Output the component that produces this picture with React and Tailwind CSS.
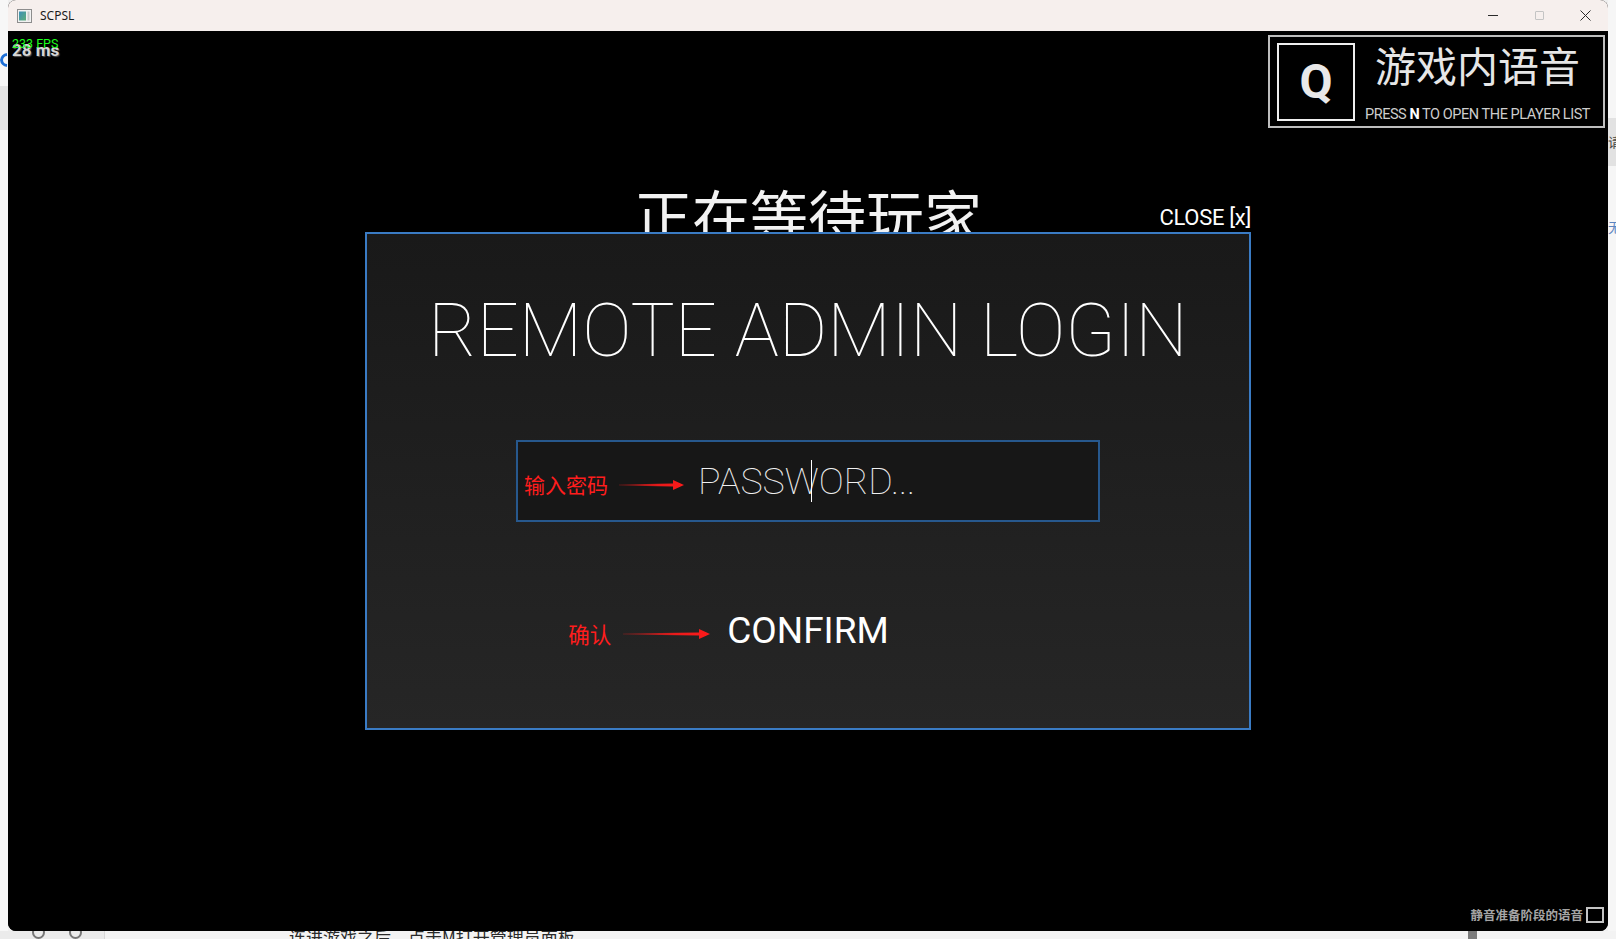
import React from "react";

const cjk = "font-[family-name:'Noto_Sans_CJK_SC',sans-serif]";

function AppIcon() {
  return (
    <svg width="15" height="14" viewBox="0 0 15 14">
      <defs>
        <linearGradient id="appicon" x1="0" y1="0" x2="1" y2="1">
          <stop offset="0" stopColor="#3d8fb8" />
          <stop offset="1" stopColor="#5fae7a" />
        </linearGradient>
      </defs>
      <rect x="0.5" y="0.5" width="14" height="13" fill="#f2f2f2" stroke="#8d8d8d" />
      <rect x="2" y="2.5" width="7" height="9" fill="url(#appicon)" />
      <rect x="10.5" y="2.5" width="2" height="9" fill="#c9c9c9" />
    </svg>
  );
}

function TitleBar() {
  return (
    <div className="h-[31px] bg-[#f6efed] flex items-center shrink-0">
      <div className="ml-[9px] flex items-center">
        <AppIcon />
      </div>
      <span className="ml-[8px] text-[12px] text-[#1b1b1b] font-[family-name:'Noto_Sans',sans-serif]">SCPSL</span>
      <div className="ml-auto flex h-full">
        <div className="w-[46px] flex items-center justify-center">
          <div className="w-[10px] h-px bg-[#2a2a2a]" />
        </div>
        <div className="w-[46px] flex items-center justify-center">
          <div className="w-[9px] h-[9px] border border-[#c4c4c4] rounded-[1px]" />
        </div>
        <div className="w-[46px] flex items-center justify-center">
          <svg width="11" height="11" viewBox="0 0 11 11">
            <path d="M0.5 0.5 L10.5 10.5 M10.5 0.5 L0.5 10.5" stroke="#2a2a2a" strokeWidth="1" />
          </svg>
        </div>
      </div>
    </div>
  );
}

function Arrow({ width, id }) {
  const h = 12;
  const m = 6;
  const head = 11;
  const pts = [
    `0,${m - 0.4}`,
    `${width - head},${m - 1.5}`,
    `${width - head},${m - 5}`,
    `${width},${m}`,
    `${width - head},${m + 5}`,
    `${width - head},${m + 1.5}`,
    `0,${m + 0.4}`,
  ].join(" ");
  return (
    <svg width={width} height={h} viewBox={`0 0 ${width} ${h}`} className="shrink-0">
      <defs>
        <linearGradient id={id} x1="0" y1="0" x2="1" y2="0">
          <stop offset="0" stopColor="#ff1a1a" stopOpacity="0.25" />
          <stop offset="0.6" stopColor="#ff1a1a" stopOpacity="0.9" />
          <stop offset="1" stopColor="#ff1a1a" />
        </linearGradient>
      </defs>
      <polygon points={pts} fill={`url(#${id})`} />
    </svg>
  );
}

function Fps() {
  return (
    <div className="relative pt-[7px] font-[family-name:Roboto,sans-serif] whitespace-nowrap">
      <span className="block text-[17px] leading-none font-bold text-[#d6d6d6] [text-shadow:1px_1px_1px_#555]">28 ms</span>
      <span className="absolute left-0 top-[3px] text-[12.5px] leading-none text-[#1cff1c]">233 FPS</span>
    </div>
  );
}

function VoiceHint() {
  return (
    <div className="w-[337px] h-[93px] border-2 border-[#bebebe] flex items-start pt-[6px] pl-[7px]">
      <div className="w-[78px] h-[78px] border-2 border-[#efefef] flex items-center justify-center shrink-0">
        <span className="text-[48px] font-bold leading-none text-[#e9e9e9] font-[family-name:Roboto,sans-serif]">Q</span>
      </div>
      <div className="flex-1 flex flex-col items-center pt-[1px] pr-[3px]">
        <span className={`${cjk} text-[41px] leading-none text-[#e6e6e6]`}>游戏内语音</span>
        <span className="mt-[23px] text-[14.5px] leading-none tracking-[-0.45px] text-[#cdcdcd] font-[family-name:Roboto,sans-serif]">
          PRESS <b className="text-white font-bold">N</b> TO OPEN THE PLAYER LIST
        </span>
      </div>
    </div>
  );
}

function LoginModal() {
  return (
    <div className="w-[886px] h-[498px] mx-auto shrink-0 border-2 border-[#3a7bc4] bg-linear-to-b from-[#191919] to-[#262626] flex flex-col items-center font-[family-name:Roboto,sans-serif]">
      <h1 className="mt-[60px] text-[74px] leading-none font-thin text-white">REMOTE ADMIN LOGIN</h1>

      <div className="mt-[72px] w-[584px] h-[82px] border-2 border-[#27588d] bg-[#171717] flex items-center pl-[6px]">
        <span className={`${cjk} mt-[7px] text-[21px] leading-none text-[#ff1d1d]`}>输入密码</span>
        <div className="ml-[11px] mt-[7px] flex">
          <Arrow width={65} id="arrow-pass" />
        </div>
        <span className="ml-[14px] text-[37.5px] leading-none font-thin text-[#f0f0f0] whitespace-nowrap">
          PASSW
          <span className="inline-block w-[1.5px] h-[42px] bg-white align-[-8px] -ml-[8px] mr-[6.5px]" />
          ORD...
        </span>
      </div>

      <div className="mt-[90px] w-full grid grid-cols-[1fr_auto_1fr] items-center">
        <div className="flex justify-end items-center pr-[17px] mt-[6px]">
          <span className={`${cjk} text-[21.5px] leading-none text-[#ff1d1d]`}>确认</span>
          <div className="ml-[12px] flex">
            <Arrow width={87} id="arrow-confirm" />
          </div>
        </div>
        <span className="text-[37px] leading-none text-white">CONFIRM</span>
        <div />
      </div>
    </div>
  );
}

function GameView() {
  return (
    <div className="flex-1 flex flex-col bg-black">
      <div className="flex justify-between items-start pt-1 pl-1 pr-[3px] shrink-0">
        <Fps />
        <VoiceHint />
      </div>

      <div className="w-[886px] mx-auto h-[104px] overflow-hidden grid grid-cols-[1fr_auto_1fr] shrink-0">
        <div />
        <div className={`${cjk} pt-[57px] text-[58px] leading-none text-[#f2f2f2] whitespace-nowrap`}>正在等待玩家</div>
        <div className="flex justify-end items-end pb-[14px]">
          <span className="text-[22px] leading-none text-white tracking-[-0.3px] font-[family-name:Roboto,sans-serif]">CLOSE [x]</span>
        </div>
      </div>

      <LoginModal />

      <div className="flex-1" />
      <div className="flex justify-end items-center gap-[3px] pb-[8px] pr-[4px]">
        <span className={`${cjk} text-[12.5px] leading-none font-bold text-[#a5a5a5]`}>静音准备阶段的语音</span>
        <div className="w-[18px] h-[16px] border-2 border-[#c4c4c4]" />
      </div>
    </div>
  );
}

function LeftEdge() {
  return (
    <div className="w-[8px] flex flex-col bg-[#f7f7f7] shrink-0">
      <div className="h-[52px]" />
      <svg width="8" height="16" viewBox="0 0 8 16">
        <path d="M7 2.5 A6 6 0 0 0 1.5 8 A6 6 0 0 0 7 13.5" stroke="#1d6fd6" strokeWidth="3" fill="none" />
      </svg>
      <div className="mt-[18px] h-[44px] bg-[#e4e4e4]" />
    </div>
  );
}

function RightEdge() {
  return (
    <div className="w-[8px] flex flex-col bg-[#f6f6f6] overflow-hidden shrink-0">
      <div className="h-[118px]" />
      <div className="h-[48px] bg-[#e2e2e2] pt-[17px]">
        <span className={`${cjk} block text-[13px] leading-none text-[#444]`}>请</span>
      </div>
      <div className="h-[54px]" />
      <span className={`${cjk} block text-[13px] leading-none text-[#5a84c0]`}>无</span>
    </div>
  );
}

function BottomEdge() {
  return (
    <div className="h-[8px] flex overflow-hidden bg-[#f3f3f3]">
      <div className="w-[105px] flex bg-[#ebebeb] border-r border-[#d8d8d8] shrink-0">
        <div className="ml-[32px] -mt-[5px] w-[13px] h-[13px] rounded-full border-2 border-[#777]" />
        <div className="ml-[24px] -mt-[5px] w-[13px] h-[13px] rounded-full border-2 border-[#777]" />
      </div>
      <span className={`${cjk} ml-[184px] -mt-[3px] text-[17px] leading-none text-[#2a2a2a] whitespace-nowrap`}>连进游戏之后，点击M打开管理员面板</span>
      <div className="ml-auto mr-[139px] w-[9px] h-full bg-[#7b7b7b]" />
    </div>
  );
}

export default function App() {
  return (
    <div className="w-[1616px] h-[939px] overflow-hidden bg-[#efefef] flex flex-col">
      <div className="flex h-[931px] shrink-0">
        <LeftEdge />
        <div className="w-[1600px] h-full flex flex-col rounded-[8px] overflow-hidden bg-black shrink-0">
          <TitleBar />
          <GameView />
        </div>
        <RightEdge />
      </div>
      <BottomEdge />
    </div>
  );
}
